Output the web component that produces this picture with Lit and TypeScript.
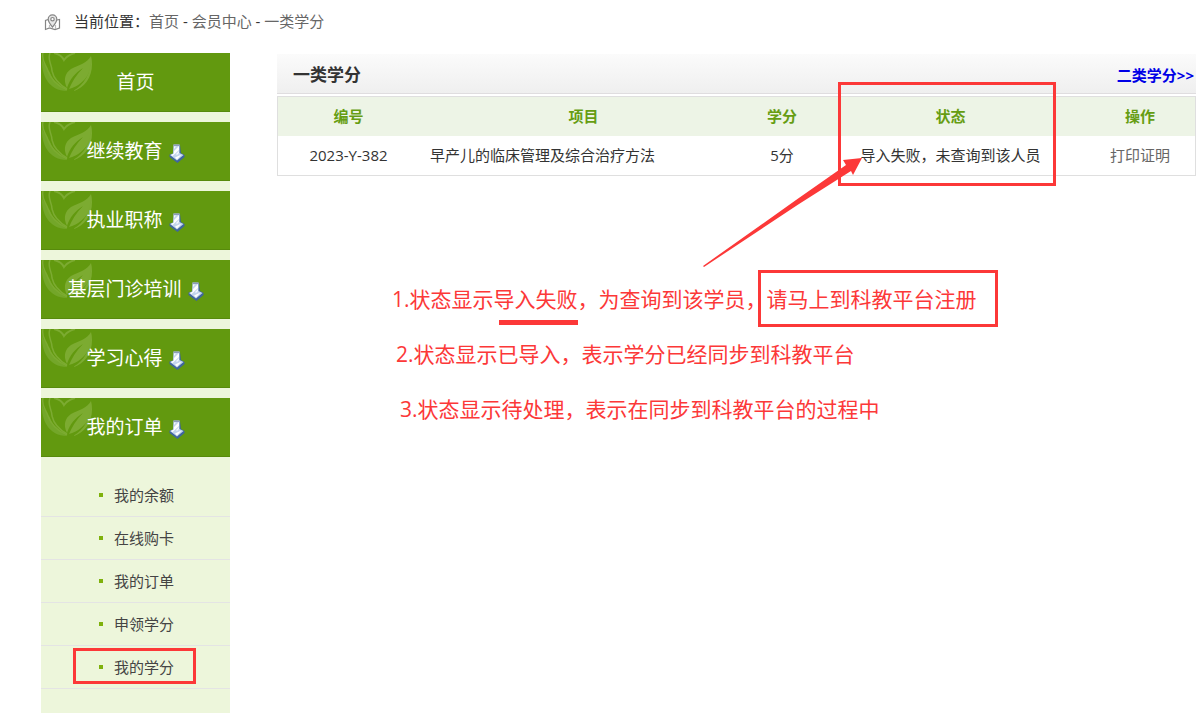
import { LitElement, html, css, svg, nothing } from "lit";
import { customElement, state } from "lit/decorators.js";

interface MenuEntry {
  label: string;
  expandable: boolean;
}

interface Credit {
  code: string;
  project: string;
  credit: string;
  status: string;
}

const MENU: MenuEntry[] = [
  { label: "首页", expandable: false },
  { label: "继续教育", expandable: true },
  { label: "执业职称", expandable: true },
  { label: "基层门诊培训", expandable: true },
  { label: "学习心得", expandable: true },
  { label: "我的订单", expandable: true },
];

const SUBMENU = ["我的余额", "在线购卡", "我的订单", "申领学分", "我的学分"];

const CREDITS: Credit[] = [
  {
    code: "2023-Y-382",
    project: "早产儿的临床管理及综合治疗方法",
    credit: "5分",
    status: "导入失败，未查询到该人员",
  },
];

const leaf = svg`
  <path d="M1 6C0 22 8 38 26 38C18 33 13 29 10 22C8 16 3 13 1 6Z" fill="#73a629"/>
  <g fill="none" stroke="#7cab31">
    <path d="M2 0C0 8 5 11 7 18C10 27 17 33 26 37" stroke-width="1.5"/>
    <path d="M9 0C6 7 11 11 11 18C13 27 19 32 26 36" stroke-width="1.5"/>
    <path d="M13 0C18 1 21 3 23 7C26 3 30 1 34 0" stroke-width="2"/>
  </g>
  <path d="M50 3C51 14 48 23 42 28C37 33 32 35 28 36C31 29 35 22 42 15C34 20 29 26 26 35C22 27 24 20 30 16C38 12 46 10 50 3Z" fill="#7cab31"/>
  <path d="M50 3C54 19 46 35 32 38C43 32 50 21 50 3Z" fill="#7cab31"/>`;

@customElement("side-menu")
export class SideMenu extends LitElement {
  @state() private open = true;

  static styles = css`
    :host {
      display: block;
      background: #edf6db;
    }
    .menu {
      display: flex;
      flex-direction: column;
      gap: 10px;
    }
    .entry {
      position: relative;
      box-sizing: border-box;
      display: flex;
      align-items: center;
      justify-content: center;
      gap: 6px;
      width: 100%;
      height: 59px;
      margin: 0;
      padding: 0;
      border: 0;
      border-bottom: 1px solid #578a0c;
      background: #62990f;
      color: #fff;
      font: inherit;
      font-size: 19px;
      line-height: 24px;
      text-decoration: none;
      cursor: pointer;
    }
    .leaf {
      position: absolute;
      left: 0;
      top: 0;
      width: 53px;
      height: 40px;
    }
    .label {
      position: relative;
    }
    .down {
      width: 16px;
      height: 19px;
      margin-top: 4px;
    }
    .sub {
      list-style: none;
      margin: 0;
      padding: 17px 0 24px;
    }
    .item {
      position: relative;
      border-bottom: 1px solid #e4e4e4;
    }
    .link {
      display: flex;
      align-items: center;
      justify-content: center;
      gap: 11px;
      height: 42px;
      padding-left: 2px;
      color: #444;
      font-size: 15px;
      line-height: 20px;
      text-decoration: none;
    }
    .link::before {
      content: "";
      width: 4px;
      height: 4px;
      background: #7fb10c;
    }
    .mark {
      position: absolute;
      inset: 2px 34px 4px 32px;
      border: 3px solid #fc3838;
      pointer-events: none;
    }
  `;

  private renderEntry(entry: MenuEntry, last: boolean) {
    const art = html`<svg class="leaf" viewBox="0 0 53 40" aria-hidden="true">${leaf}</svg>`;
    if (!entry.expandable) {
      return html`<a class="entry" href="#">${art}<span class="label">${entry.label}</span></a>`;
    }
    return html`
      <button
        class="entry"
        type="button"
        aria-expanded=${last && this.open ? "true" : "false"}
        @click=${() => {
          if (last) this.open = !this.open;
        }}
      >
        ${art}<span class="label">${entry.label}</span>
        <svg class="down" viewBox="0 0 16 19" aria-hidden="true">
          <path d="M5 1H11L12 9L15.500 11V13L8.500 19L0.500 13V10.500L4 9.500Z" fill="#3f659e" />
          <path d="M4.500 0.500H10.500V9L14.500 11L8 16.500L1 11L4 9.500Z" fill="#c3d5ec" />
          <path d="M5 7L10 2V6L3.500 12L2 11L5 9.500ZM6 13.500L12.500 10.500L8 15.500Z" fill="#fff" />
          <path d="M4.500 0.500H10.500V2H4.500Z" fill="#8d9db8" />
          <path d="M5 2.500H7L5 5ZM7 10L10 7V9L8 11Z" fill="#f5f9ff" />
        </svg>
      </button>
    `;
  }

  render() {
    return html`
      <nav>
        <div class="menu">
          ${MENU.map((entry, i) => this.renderEntry(entry, i === MENU.length - 1))}
        </div>
        ${this.open
          ? html`<ul class="sub">
              ${SUBMENU.map(
                (label, i) => html`<li class="item">
                  <a class="link" href="#">${label}</a>
                  ${i === SUBMENU.length - 1 ? html`<span class="mark"></span>` : nothing}
                </li>`
              )}
            </ul>`
          : nothing}
      </nav>
    `;
  }
}

@customElement("credit-panel")
export class CreditPanel extends LitElement {
  static styles = css`
    :host {
      display: block;
      position: relative;
      color: #333;
      font-size: 15px;
      line-height: 20px;
    }
    .head {
      display: flex;
      align-items: center;
      justify-content: space-between;
      box-sizing: border-box;
      height: 40px;
      margin: 1px 0 2px;
      padding: 2px 2px 0 16px;
      border-bottom: 1px solid #dfdddf;
      background: linear-gradient(#fbfbfb, #efefef);
    }
    .title {
      margin: 0;
      font-size: 17px;
      line-height: 24px;
      font-weight: bold;
    }
    .more {
      color: #0000e6;
      font-weight: bold;
      text-decoration: none;
    }
    .table {
      width: 100%;
      table-layout: fixed;
      border-collapse: separate;
      border-spacing: 0;
      border: 1px solid #dfdfdf;
    }
    .code {
      width: 141px;
    }
    .credit {
      width: 68px;
    }
    .status {
      width: 269px;
    }
    .action {
      width: 110px;
    }
    .th,
    .td {
      height: 37px;
      padding: 0 0 2px;
      text-align: center;
      white-space: nowrap;
    }
    .th {
      background: #edf4e6;
      color: #669d12;
      font-weight: bold;
    }
    .name {
      padding-left: 11px;
      text-align: left;
    }
    .print {
      color: #666;
      text-decoration: none;
    }
    .status-mark {
      position: absolute;
      top: 29px;
      right: 140px;
      box-sizing: border-box;
      width: 218px;
      height: 104px;
      border: 3px solid #fc3838;
      pointer-events: none;
    }
    .arrow {
      position: absolute;
      top: 97px;
      right: 330px;
      width: 170px;
      height: 120px;
      pointer-events: none;
    }
    .notes {
      display: flex;
      flex-direction: column;
      gap: 27px;
      margin: 109px 0 0 115px;
      color: #fc3838;
      font-size: 21px;
      line-height: 28px;
      white-space: nowrap;
    }
    .note {
      margin: 0;
    }
    .second {
      padding-left: 4px;
    }
    .third {
      padding-left: 8px;
    }
    .underlined,
    .boxed {
      display: inline-block;
      position: relative;
    }
    .underlined::after {
      content: "";
      position: absolute;
      left: 5px;
      right: 0;
      bottom: -12px;
      height: 5px;
      background: #fc3838;
    }
    .boxed::after {
      content: "";
      position: absolute;
      inset: -15px -21px -14px -9px;
      border: 3px solid #fc3838;
    }
  `;

  render() {
    return html`
      <header class="head">
        <h1 class="title">一类学分</h1>
        <a class="more" href="#">二类学分&gt;&gt;</a>
      </header>
      <table class="table">
        <thead>
          <tr>
            <th class="th code" scope="col">编号</th>
            <th class="th" scope="col">项目</th>
            <th class="th credit" scope="col">学分</th>
            <th class="th status" scope="col">状态</th>
            <th class="th action" scope="col">操作</th>
          </tr>
        </thead>
        <tbody>
          ${CREDITS.map(
            (c) => html`<tr>
              <td class="td">${c.code}</td>
              <td class="td name">${c.project}</td>
              <td class="td">${c.credit}</td>
              <td class="td">${c.status}</td>
              <td class="td"><a class="print" href="#">打印证明</a></td>
            </tr>`
          )}
        </tbody>
      </table>
      <span class="status-mark"></span>
      <svg class="arrow" viewBox="0 0 170 120" aria-hidden="true">
        <path d="M166 8L147 10L150 15L100 50L7 116L8 117L103 54L155 21L157 25Z" fill="#fc3838" />
      </svg>
      <section class="notes">
        <p class="note">1.状态显示<span class="underlined">导入失败</span>，为查询到该学员，<span class="boxed">请马上到科教平台注册</span></p>
        <p class="note second">2.状态显示已导入，表示学分已经同步到科教平台</p>
        <p class="note third">3.状态显示待处理，表示在同步到科教平台的过程中</p>
      </section>
    `;
  }
}

@customElement("app-root")
export class AppRoot extends LitElement {
  static styles = css`
    :host {
      display: flex;
      flex-direction: column;
      min-height: 100vh;
      background: #fff;
      color: #333;
      font-family: "Open Sans", "Noto Sans CJK SC", sans-serif;
    }
    .crumbs {
      display: flex;
      align-items: center;
      box-sizing: border-box;
      height: 53px;
      padding: 0 0 12px 44px;
      font-size: 15px;
      line-height: 20px;
    }
    .pin {
      width: 17px;
      height: 17px;
      margin: 4px 13px 0 0;
    }
    .crumb {
      color: #666;
      text-decoration: none;
    }
    .body {
      flex: 1;
      display: grid;
      grid-template-columns: 189px minmax(0, 1fr);
      column-gap: 47px;
      padding: 0 1px 0 41px;
    }
  `;

  render() {
    return html`
      <nav class="crumbs">
        <svg class="pin" viewBox="0 0 17 17" fill="none" stroke="#858585" stroke-width="1.2" aria-hidden="true">
          <path d="M4 5.500L1.500 6.500V15.500L5.500 14L11 15.500L15.500 14V5.500L13 6" />
          <path d="M5.500 11V14M11.500 11V15" stroke="#bbb" />
          <path d="M8.500 13C6 10 4.200 8 4.200 5.200A4.300 4.300 0 0 1 12.800 5.200C12.800 8 11 10 8.500 13Z" fill="#e6e6e6" />
          <circle cx="8.500" cy="5.200" r="1.700" fill="#fff" />
        </svg>
        <div>
          当前位置：<a class="crumb" href="#">首页</a> - <a class="crumb" href="#">会员中心</a> -
          <a class="crumb" href="#">一类学分</a>
        </div>
      </nav>
      <div class="body">
        <side-menu></side-menu>
        <credit-panel></credit-panel>
      </div>
    `;
  }
}
